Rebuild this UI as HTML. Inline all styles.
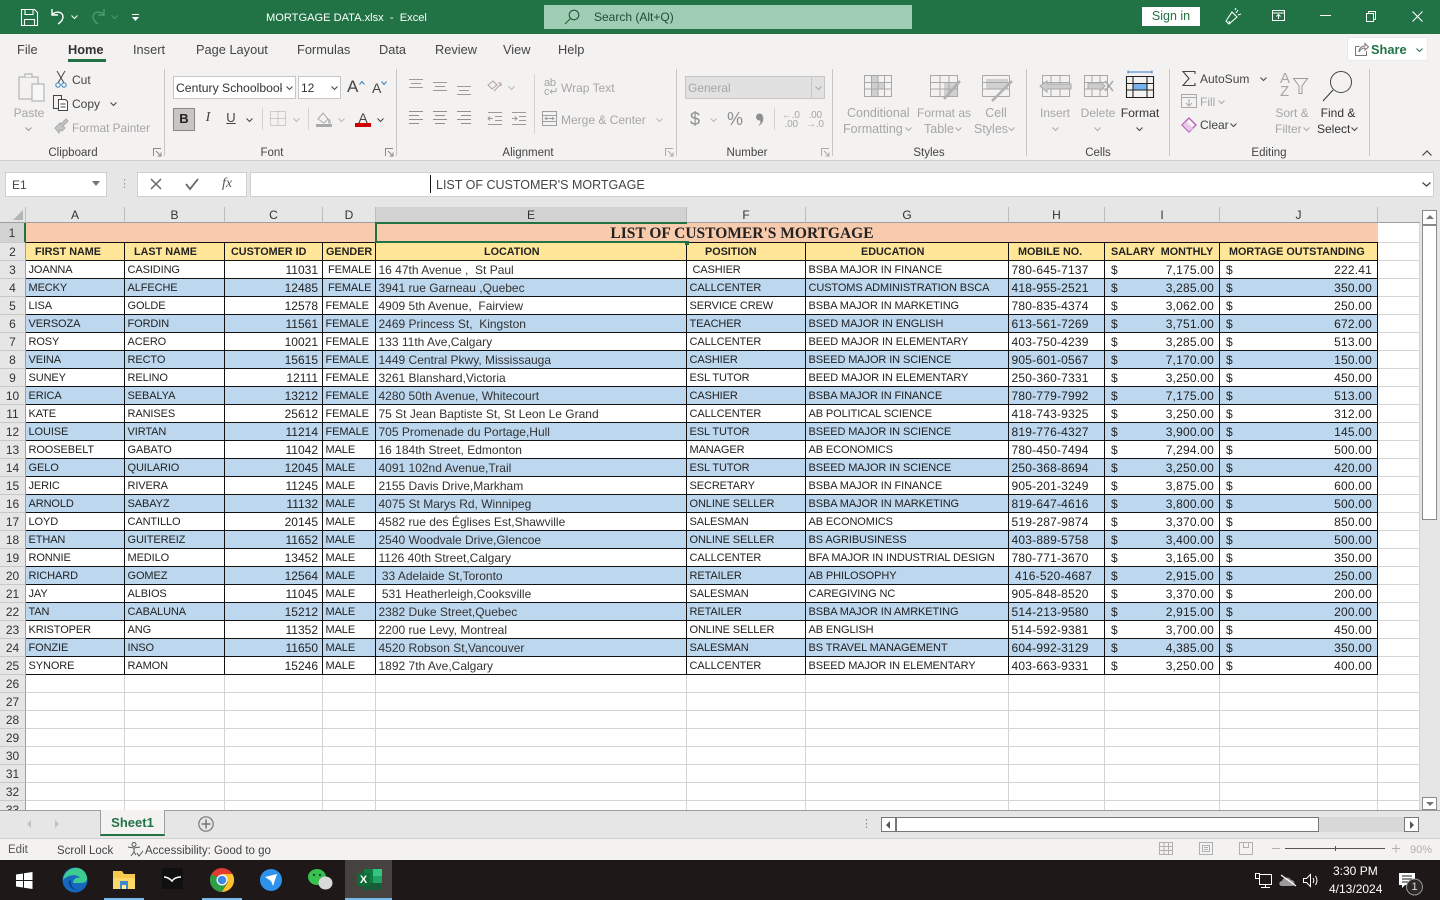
<!DOCTYPE html>
<html><head><meta charset="utf-8"><title>MORTGAGE DATA.xlsx - Excel</title>
<style>
*{box-sizing:border-box}
html,body{margin:0;padding:0;width:1440px;height:900px;overflow:hidden;background:#f3f2f1;font-family:"Liberation Sans",sans-serif;color:#333}
.a{position:absolute}
.t{position:absolute;white-space:nowrap;font-size:12.5px;line-height:16px;color:#444}
.g{color:#a6a6a6}
.c{text-align:center}
svg{position:absolute;overflow:visible}
.sep{position:absolute;width:1px;background:#c8c6c4;top:69px;height:87px}
table{position:absolute;left:0;top:207px;border-collapse:separate;border-spacing:0;table-layout:fixed;width:1420px;background:#fff}
td,th{padding:2px 2.5px 0;font-size:11px;font-weight:normal;white-space:nowrap;overflow:hidden;height:18px;line-height:15px;letter-spacing:-.1px;color:#222;border-right:1px solid #111;border-bottom:1px solid #111;text-align:left}
thead th{padding-top:0;font-size:12px;background:#e6e6e6;color:#333;text-align:center;height:16px;line-height:14px;border-right:1px solid #bdbdbd;border-bottom:1px solid #9e9e9e;letter-spacing:0}
thead th.s{background:#d2d2d2;border-bottom:1px solid #217346}
thead th.e{border-right:none}
td.r{font-size:12px;background:#e6e6e6;color:#333;text-align:center;border-right:1px solid #9e9e9e;border-bottom:1px solid #c8c8c8;padding:0;letter-spacing:0;line-height:16px}
td.rs{background:#d2d2d2;border-right:2px solid #217346}
td.x{border-right:1px solid #d4d4d4;border-bottom:1px solid #d4d4d4}
tr.b td:not(.r):not(.x){background:#bdd7ee}
tr.h td{background:#ffe699;font-weight:bold;font-size:10.8px;letter-spacing:0}
tr.h td.r{background:#e6e6e6;font-weight:normal;font-size:12px;padding:0}
tbody td:nth-child(9),td.n,td.m{font-size:12px;letter-spacing:.2px}
tr.h td:nth-child(9){font-size:10.8px;letter-spacing:0}
td.n{text-align:right;padding-right:4px;letter-spacing:0}
td.m{text-align:right;padding-right:5px;padding-left:6px}
td.m i{float:left;font-style:normal}
td.l{color:#333;font-size:12px;letter-spacing:0;padding-top:1px;line-height:16px}
td.ti{background:#f8cbad;font-family:"Liberation Serif",serif;font-weight:bold;font-size:15.5px;text-align:center;height:20px;line-height:16px;letter-spacing:0;border-right:none;overflow:visible;padding:3px 270px 0 0;border-bottom:1px solid #111}
</style></head><body>

<!-- title bar -->
<div class="a" style="left:0;top:0;width:1440px;height:34px;background:#217346"></div>
<svg style="left:21px;top:9px" width="17" height="17" fill="none" stroke="#fff" stroke-width="1.1"><path d="M.5.500h13l3 3v13H.5zM4 .5v5h8v-5M3.500 16.500v-6h10v6"/></svg>
<svg style="left:50px;top:8px" width="16" height="18" fill="none" stroke="#fff" stroke-width="1.4"><path d="M2 1v6h6M2 7c3-4 11-4 11 2 0 3-2 5-5 7"/></svg>
<svg style="left:71px;top:15px" width="7" height="4" fill="none" stroke="#fff"><path d="M.5.500l3 3 3-3"/></svg>
<svg style="left:90px;top:8px" width="16" height="18" fill="none" stroke="#4b9a70" stroke-width="1.4"><path d="M14 1v6H8M14 7c-3-4-11-4-11 2 0 3 2 5 5 7"/></svg>
<svg style="left:111px;top:15px" width="7" height="4" fill="none" stroke="#4b9a70"><path d="M.5.500l3 3 3-3"/></svg>
<svg style="left:131px;top:14px" width="9" height="8" fill="#fff"><path d="M1 0h7v1H1zM1 3h7L4.500 7z"/></svg>
<div class="t" style="left:266px;top:10px;color:#fff;font-size:11.1px">MORTGAGE DATA.xlsx &nbsp;- &nbsp;Excel</div>
<div class="a" style="left:544px;top:5px;width:368px;height:24px;background:#9fcdb3"></div>
<svg style="left:564px;top:9px" width="16" height="16" fill="none" stroke="#1f5a38" stroke-width="1.1"><circle cx="10" cy="6" r="4.800"/><path d="M6.500 9.500L1 15"/></svg>
<div class="t" style="left:594px;top:9px;color:#1d4d33;font-size:12px">Search (Alt+Q)</div>
<div class="a c" style="left:1142px;top:7px;width:58px;height:19px;background:#fff;color:#217346;font-size:12.5px;line-height:19px">Sign in</div>
<svg style="left:1225px;top:8px" width="17" height="17" fill="none" stroke="#fff" stroke-width="1.1"><path d="M1 13l6-9 5 5-8 7zM5 16l-1-3M11 5l2-3M13 7l3-1M10 2l1-2"/></svg>
<svg style="left:1272px;top:10px" width="13" height="12" fill="none" stroke="#fff"><path d="M.5.500h12v10H.5zM.5 3h12"/><path d="M6.500 9V4.500M4.500 6.500l2-2 2 2"/></svg>
<svg style="left:1320px;top:15px" width="11" height="2"><path d="M0 .5h11" stroke="#fff"/></svg>
<svg style="left:1366px;top:11px" width="10" height="11" fill="none" stroke="#fff"><path d="M.5 2.500h7v8h-7zM2.500 2.500V.5h7v8H7.500"/></svg>
<svg style="left:1412px;top:11px" width="11" height="11" stroke="#fff" stroke-width="1.100"><path d="M.5.500l10 10M10.500.5l-10 10"/></svg>

<!-- tabs -->
<div class="t" style="left:17px;top:42px;font-size:12.8px">File</div>
<div class="t" style="left:68px;top:42px;font-size:12.8px;font-weight:bold;color:#333">Home</div>
<div class="a" style="left:68px;top:59px;width:38px;height:3px;background:#217346"></div>
<div class="t" style="left:133px;top:42px;font-size:12.8px">Insert</div>
<div class="t" style="left:196px;top:42px;font-size:12.8px">Page Layout</div>
<div class="t" style="left:297px;top:42px;font-size:12.8px">Formulas</div>
<div class="t" style="left:379px;top:42px;font-size:12.8px">Data</div>
<div class="t" style="left:435px;top:42px;font-size:12.8px">Review</div>
<div class="t" style="left:503px;top:42px;font-size:12.8px">View</div>
<div class="t" style="left:558px;top:42px;font-size:12.8px">Help</div>
<div class="a" style="left:1348px;top:38px;width:79px;height:22px;background:#fff;border-radius:2px;box-shadow:0 0 1px #bbb"></div>
<svg style="left:1355px;top:43px" width="14" height="13" fill="none" stroke="#777"><path d="M.5 3.500h4M.5 3.500v9h11V8M4 9c0-4 3-6 6-6V.5L13.500 4 10 7V5C7 5 5 7 4 9z"/></svg>
<div class="t" style="left:1371px;top:42px;color:#217346;font-weight:bold;font-size:12.8px">Share</div>
<svg style="left:1416px;top:48px" width="7" height="4" fill="none" stroke="#217346"><path d="M.5.500l3 3 3-3"/></svg>

<!-- clipboard -->
<svg style="left:18px;top:72px" width="28" height="30" fill="#f3f2f1" stroke="#b5b5b5" stroke-width="1.200"><path d="M1 5h19v22H1z"/><path d="M7 5V2h7v3"/><path fill="#f7f7f7" d="M14 12h12v17H14z"/></svg>
<div class="t g c" style="left:13px;top:105px;width:32px;font-size:12px">Paste</div>
<svg style="left:25px;top:127px" width="7" height="4" fill="none" stroke="#999"><path d="M.5.500l3 3 3-3"/></svg>
<svg style="left:55px;top:71px" width="12" height="17" fill="none" stroke="#444"><path d="M2 0l7 12M10 0L3 12"/><circle cx="3" cy="14" r="2.200" stroke="#2f7ec2"/><circle cx="9" cy="14" r="2.200" stroke="#2f7ec2"/></svg>
<div class="t" style="left:72px;top:72px;font-size:12px">Cut</div>
<svg style="left:53px;top:95px" width="16" height="16" fill="#f3f2f1" stroke="#444"><path d="M.5.500h8v13h-8z"/><path fill="#fff" d="M5.500 4.500h7l2 2v9h-9z"/><path d="M7.500 9h5M7.500 12h5"/></svg>
<div class="t" style="left:72px;top:96px;font-size:12px">Copy</div>
<svg style="left:110px;top:102px" width="7" height="4" fill="none" stroke="#444"><path d="M.5.500l3 3 3-3"/></svg>
<svg style="left:54px;top:119px" width="15" height="15" fill="#c4c4c4" stroke="#aaa"><path d="M1 9l5-5 5 5-3 3-2-1-1 3z"/><path d="M7 5l5-5 2 2-5 5"/></svg>
<div class="t g" style="left:72px;top:120px;font-size:11.8px">Format Painter</div>
<div class="t c" style="left:40px;top:145px;width:66px;font-size:11.5px">Clipboard</div>
<svg style="left:153px;top:148px" width="9" height="9" fill="none" stroke="#888"><path d="M.5 8V.5H8M3 3l5 5M8 4.500V8H4.500"/></svg>
<div class="sep" style="left:164px"></div>

<!-- font -->
<div class="a" style="left:173px;top:76px;width:123px;height:23px;background:#fff;border:1px solid #c8c6c4"></div>
<div class="t" style="left:176px;top:80px;font-size:12.2px;width:106px;overflow:hidden;color:#333">Century Schoolbook</div>
<svg style="left:286px;top:86px" width="7" height="4" fill="none" stroke="#444"><path d="M.5.500l3 3 3-3"/></svg>
<div class="a" style="left:298px;top:76px;width:43px;height:23px;background:#fff;border:1px solid #c8c6c4"></div>
<div class="t" style="left:301px;top:80px;color:#333;font-size:12px">12</div>
<svg style="left:331px;top:86px" width="7" height="4" fill="none" stroke="#444"><path d="M.5.500l3 3 3-3"/></svg>
<div class="t" style="left:347px;top:77px;font-size:17px;line-height:20px;color:#444">A</div>
<svg style="left:359px;top:81px" width="6" height="4" fill="none" stroke="#2f7ec2"><path d="M.5 3.500l2.500-3 2.500 3"/></svg>
<div class="t" style="left:372px;top:79px;font-size:14px;line-height:18px;color:#444">A</div>
<svg style="left:381px;top:81px" width="6" height="4" fill="none" stroke="#2f7ec2"><path d="M.5.500l2.500 3 2.500-3"/></svg>
<div class="a" style="left:173px;top:108px;width:22px;height:23px;background:#c8c6c4;border:1px solid #8a8886"></div>
<div class="t c" style="left:173px;top:111px;width:22px;font-weight:bold;font-size:13px;color:#222">B</div>
<div class="t c" style="left:197px;top:110px;width:22px;font-family:'Liberation Serif',serif;font-style:italic;font-size:14px">I</div>
<div class="t c" style="left:220px;top:110px;width:22px;font-size:13px;text-decoration:underline">U</div>
<svg style="left:246px;top:118px" width="7" height="4" fill="none" stroke="#444"><path d="M.5.500l3 3 3-3"/></svg>
<div class="a" style="left:262px;top:108px;width:1px;height:22px;background:#d5d3d1"></div>
<svg style="left:270px;top:111px" width="16" height="15" fill="none" stroke="#a8a8a8" stroke-dasharray="1 1"><path d="M.5.500h15v14H.5zM8 .5v14M.5 7.500h15"/></svg>
<svg style="left:293px;top:118px" width="7" height="4" fill="none" stroke="#b8b8b8"><path d="M.5.500l3 3 3-3"/></svg>
<div class="a" style="left:308px;top:108px;width:1px;height:22px;background:#d5d3d1"></div>
<svg style="left:316px;top:111px" width="17" height="16" fill="none" stroke="#aaa"><path d="M2 8l5-6 5 6-4 4z"/><path d="M13 8c1 2 2 3 1 4s-2-1-1-4"/><path stroke="none" fill="#aaa" d="M0 13h16v3H0z"/></svg>
<svg style="left:338px;top:118px" width="7" height="4" fill="none" stroke="#b8b8b8"><path d="M.5.500l3 3 3-3"/></svg>
<div class="t c" style="left:355px;top:110px;width:16px;font-size:14px;color:#444">A</div>
<div class="a" style="left:355px;top:123px;width:16px;height:4px;background:#d00000"></div>
<svg style="left:377px;top:118px" width="7" height="4" fill="none" stroke="#444"><path d="M.5.500l3 3 3-3"/></svg>
<div class="t c" style="left:240px;top:145px;width:64px;font-size:11.5px">Font</div>
<svg style="left:385px;top:148px" width="9" height="9" fill="none" stroke="#888"><path d="M.5 8V.5H8M3 3l5 5M8 4.500V8H4.500"/></svg>
<div class="sep" style="left:396px"></div>

<!-- alignment -->
<svg style="left:408px;top:78px" width="70" height="18" fill="none" stroke="#9a9a9a"><path d="M1 1.500h14M3 5.500h10M1 9.500h14M25 4.500h14M27 8.500h10M25 12.500h14M49 8.500h14M51 12.500h10M49 16.500h14"/></svg>
<svg style="left:408px;top:111px" width="70" height="14" fill="none" stroke="#8f8f8f"><path d="M1 .5h14M1 4.500h10M1 8.500h14M1 12.500h10M25 .5h14M27 4.500h10M25 8.500h14M27 12.500h10M49 .5h14M53 4.500h10M49 8.500h14M53 12.500h10"/></svg>
<svg style="left:487px;top:80px" width="16" height="14" fill="none" stroke="#b0a0a0"><path d="M1 5l5-4 4 4-5 4zM7 11l7-7M11 3h3v3"/></svg>
<svg style="left:508px;top:86px" width="7" height="4" fill="none" stroke="#b8b8b8"><path d="M.5.500l3 3 3-3"/></svg>
<svg style="left:487px;top:112px" width="40" height="13" fill="none" stroke="#9a9a9a"><path d="M1 .5h14M8 4.500h7M8 8.500h7M1 12.500h14M1 6.500h5M3 4.500l-2 2 2 2M25 .5h14M32 4.500h7M32 8.500h7M25 12.500h14M25 6.500h5M28 4.500l2 2-2 2"/></svg>
<div class="a" style="left:534px;top:74px;width:1px;height:60px;background:#d5d3d1"></div>
<div class="t g" style="left:544px;top:79px;font-size:11px;line-height:9px;letter-spacing:-.3px">ab<br>c↵</div>
<div class="t g" style="left:561px;top:80px;font-size:12px">Wrap Text</div>
<svg style="left:542px;top:111px" width="15" height="15" fill="none" stroke="#a0a0a0"><path d="M.5.500h14v14H.5zM.5 4.500h14M.5 10.500h14M3 7.500h9M5 6l-2 1.500L5 9M10 6l2 1.500L10 9"/></svg>
<div class="t g" style="left:561px;top:112px;font-size:12px">Merge &amp; Center</div>
<svg style="left:656px;top:118px" width="7" height="4" fill="none" stroke="#b8b8b8"><path d="M.5.500l3 3 3-3"/></svg>
<div class="t c" style="left:490px;top:145px;width:76px;font-size:11.5px">Alignment</div>
<svg style="left:665px;top:148px" width="9" height="9" fill="none" stroke="#aaa"><path d="M.5 8V.5H8M3 3l5 5M8 4.500V8H4.500"/></svg>
<div class="sep" style="left:676px"></div>

<!-- number -->
<div class="a" style="left:685px;top:76px;width:140px;height:23px;background:#e1e1e1;border:1px solid #c8c6c4"></div>
<div class="a" style="left:811px;top:77px;width:1px;height:21px;background:#c8c6c4"></div>
<div class="t g" style="left:688px;top:80px;font-size:12px">General</div>
<svg style="left:815px;top:86px" width="7" height="4" fill="none" stroke="#aaa"><path d="M.5.500l3 3 3-3"/></svg>
<div class="t" style="left:690px;top:109px;font-size:18px;line-height:20px;color:#8f8f8f">$</div>
<svg style="left:710px;top:118px" width="7" height="4" fill="none" stroke="#b8b8b8"><path d="M.5.500l3 3 3-3"/></svg>
<div class="t" style="left:727px;top:109px;font-size:18px;line-height:20px;color:#8f8f8f">%</div>
<svg style="left:755px;top:113px" width="9" height="13" fill="#8f8f8f"><circle cx="4.500" cy="4" r="3.500"/><path d="M5 7c3-1 3-2 3-4 1 4 0 8-5 10 2-2 3-3 2-6z"/></svg>
<div class="a" style="left:774px;top:108px;width:1px;height:22px;background:#d5d3d1"></div>
<div class="t g" style="left:782px;top:111px;font-size:10px;line-height:9px;letter-spacing:-.2px">←.0<br>&nbsp;.00</div>
<div class="t g" style="left:806px;top:111px;font-size:10px;line-height:9px;letter-spacing:-.2px">&nbsp;.00<br>→.0</div>
<div class="t c" style="left:716px;top:145px;width:62px;font-size:11.5px">Number</div>
<svg style="left:821px;top:148px" width="9" height="9" fill="none" stroke="#aaa"><path d="M.5 8V.5H8M3 3l5 5M8 4.500V8H4.500"/></svg>
<div class="sep" style="left:832px"></div>

<!-- styles -->
<svg style="left:864px;top:75px" width="28" height="22" fill="none" stroke="#a8a8a8"><path fill="#d0d0d0" stroke="none" d="M7 1h7v6h6v7h-6v7H7z"/><path d="M.5.500h27v21H.5zM7.500.5v21M14 .5v21M20.500.5v21M.5 7.500h27M.5 14h27"/></svg>
<div class="t g" style="left:847px;top:105px">Conditional</div>
<div class="t g" style="left:843px;top:121px">Formatting</div>
<svg style="left:905px;top:127px" width="7" height="4" fill="none" stroke="#aaa"><path d="M.5.500l3 3 3-3"/></svg>
<svg style="left:930px;top:75px" width="32" height="28" fill="none" stroke="#a8a8a8"><path fill="#d0d0d0" stroke="none" d="M14 7h13v14H14z"/><path d="M.5.500h27v21H.5zM.5 7.500h27M.5 14h27M10 .5v21M19 .5v21"/><path stroke="#b0b0b0" stroke-width="2.500" d="M14 24L30 6"/></svg>
<div class="t g c" style="left:916px;top:105px;width:56px;font-size:12px">Format as</div>
<div class="t g" style="left:924px;top:121px;font-size:12.5px">Table</div>
<svg style="left:955px;top:127px" width="7" height="4" fill="none" stroke="#aaa"><path d="M.5.500l3 3 3-3"/></svg>
<svg style="left:982px;top:75px" width="32" height="28" fill="none" stroke="#a8a8a8"><path fill="#d0d0d0" stroke="none" d="M4 4h22v10H4z"/><path d="M.5.500h27v21H.5zM.5 7.500h27M.5 14h27"/><path stroke="#b0b0b0" stroke-width="2.500" d="M10 26L30 6"/></svg>
<div class="t g c" style="left:972px;top:105px;width:48px">Cell</div>
<div class="t g" style="left:974px;top:121px">Styles</div>
<svg style="left:1008px;top:127px" width="7" height="4" fill="none" stroke="#aaa"><path d="M.5.500l3 3 3-3"/></svg>
<div class="t c" style="left:905px;top:145px;width:48px;font-size:11.5px">Styles</div>
<div class="sep" style="left:1026px"></div>

<!-- cells -->
<svg style="left:1040px;top:75px" width="32" height="22" fill="none" stroke="#a8a8a8"><path d="M2.500.5h27v21h-27zM2.500 7.500h27M2.500 14h27M11 .5v21M20 .5v21"/><path fill="#ccc" d="M0 11l7-5v3h24v5H7v3z"/></svg>
<div class="t g c" style="left:1035px;top:105px;width:40px;font-size:12px">Insert</div>
<svg style="left:1052px;top:127px" width="7" height="4" fill="none" stroke="#aaa"><path d="M.5.500l3 3 3-3"/></svg>
<svg style="left:1084px;top:75px" width="30" height="22" fill="none" stroke="#a8a8a8"><path d="M.5.500h23v21H.5zM.5 7.500h23M.5 14h23M8 .5v21M16 .5v21"/><path fill="#ccc" d="M4 8h12V6l5 5-5 5v-2H4z"/><path stroke-width="1.500" d="M21 6l8 10M29 6l-8 10"/></svg>
<div class="t g c" style="left:1078px;top:105px;width:40px;font-size:12px">Delete</div>
<svg style="left:1094px;top:127px" width="7" height="4" fill="none" stroke="#aaa"><path d="M.5.500l3 3 3-3"/></svg>
<svg style="left:1125px;top:70px" width="30" height="28" fill="none" stroke="#222"><path stroke="#2f7ec2" d="M3 .5v3M27 .5v3M3 2h24"/><path fill="#74b5f0" stroke="none" d="M8 13h14v7H8z"/><path d="M1.500 6.500h27v21h-27zM1.500 13.500h27M1.500 20h27M8 6.500v21M22 6.500v21" stroke-width="1.100"/></svg>
<div class="t c" style="left:1118px;top:105px;width:44px;color:#333;font-size:12.2px">Format</div>
<svg style="left:1136px;top:127px" width="7" height="4" fill="none" stroke="#444"><path d="M.5.500l3 3 3-3"/></svg>
<div class="t c" style="left:1074px;top:145px;width:48px;font-size:11.5px">Cells</div>
<div class="sep" style="left:1169px"></div>

<!-- editing -->
<svg style="left:1182px;top:71px" width="14" height="15" fill="none" stroke="#444" stroke-width="1.100"><path d="M13 3V.5H1L7 7.500 1 14.500h12V12"/></svg>
<div class="t" style="left:1200px;top:71px;font-size:12px">AutoSum</div>
<svg style="left:1260px;top:77px" width="7" height="4" fill="none" stroke="#444"><path d="M.5.500l3 3 3-3"/></svg>
<svg style="left:1181px;top:94px" width="16" height="14" fill="none" stroke="#aaa"><path d="M.5.500h15v13H.5zM.5 3.500h15M8 5v7M5 9l3 3 3-3"/></svg>
<div class="t g" style="left:1200px;top:94px;font-size:12px">Fill</div>
<svg style="left:1218px;top:100px" width="7" height="4" fill="none" stroke="#aaa"><path d="M.5.500l3 3 3-3"/></svg>
<svg style="left:1181px;top:117px" width="16" height="16" fill="none" stroke="#b55ab8" stroke-width="1.300"><path d="M1 8l7-7 7 7-7 7z"/><path d="M4 5l7 7"/><path fill="#e8c8ea" stroke="none" d="M1.500 8L5 4.500l7 7L8 14.500z"/></svg>
<div class="t" style="left:1200px;top:117px;font-size:12px">Clear</div>
<svg style="left:1230px;top:123px" width="7" height="4" fill="none" stroke="#444"><path d="M.5.500l3 3 3-3"/></svg>
<div class="t g" style="left:1280px;top:72px;font-size:15px;line-height:13px">A<br>Z</div>
<svg style="left:1293px;top:78px" width="15" height="16" fill="none" stroke="#999"><path d="M.5.500h14L9 8v7.500H6V8z"/></svg>
<div class="t g c" style="left:1270px;top:105px;width:44px;font-size:12px">Sort &amp;</div>
<div class="t g" style="left:1275px;top:121px;font-size:12px">Filter</div>
<svg style="left:1303px;top:127px" width="7" height="4" fill="none" stroke="#aaa"><path d="M.5.500l3 3 3-3"/></svg>
<svg style="left:1322px;top:71px" width="32" height="30" fill="none" stroke="#444"><circle cx="19" cy="11" r="10.500"/><path d="M11 19L1 30" stroke-width="1.200"/></svg>
<div class="t c" style="left:1314px;top:105px;width:48px;color:#333;font-size:12px">Find &amp;</div>
<div class="t" style="left:1317px;top:121px;color:#333;font-size:12px">Select</div>
<svg style="left:1351px;top:127px" width="7" height="4" fill="none" stroke="#444"><path d="M.5.500l3 3 3-3"/></svg>
<div class="t c" style="left:1245px;top:145px;width:48px;font-size:11.5px">Editing</div>
<div class="sep" style="left:1369px"></div>
<svg style="left:1422px;top:150px" width="10" height="6" fill="none" stroke="#444" stroke-width="1.200"><path d="M.5 5.500L5 1l4.500 4.500"/></svg>

<!-- formula bar -->
<div class="a" style="left:0;top:160px;width:1440px;height:47px;background:#e6e6e6;border-top:1px solid #d0cfcd"></div>
<div class="a" style="left:5px;top:172px;width:102px;height:25px;background:#fff;border:1px solid #cfcfcf"></div>
<div class="t" style="left:12px;top:177px;font-size:12px">E1</div>
<svg style="left:92px;top:181px" width="8" height="5" fill="#777"><path d="M0 0h8L4 5z"/></svg>
<div class="t" style="left:119px;top:176px;color:#999;font-size:11px">⋮</div>
<div class="a" style="left:137px;top:172px;width:110px;height:25px;background:#fff;border:1px solid #cfcfcf"></div>
<svg style="left:150px;top:178px" width="12" height="12" stroke="#666" stroke-width="1.500"><path d="M1 1l10 10M11 1L1 11"/></svg>
<svg style="left:185px;top:178px" width="14" height="12" fill="none" stroke="#666" stroke-width="1.800"><path d="M1 6l4 5 8-10"/></svg>
<div class="t" style="left:222px;top:176px;font-family:'Liberation Serif',serif;font-style:italic;font-size:14px;color:#555">fx</div>
<div class="a" style="left:250px;top:172px;width:1184px;height:25px;background:#fff;border:1px solid #cfcfcf"></div>
<div class="a" style="left:430px;top:175px;width:1px;height:18px;background:#111"></div>
<div class="t" style="left:436px;top:177px;color:#444;font-size:12.5px">LIST OF CUSTOMER'S MORTGAGE</div>
<svg style="left:1422px;top:182px" width="9" height="5" fill="none" stroke="#444" stroke-width="1.300"><path d="M.5.500l4 3.500 4-3.500"/></svg>

<!-- grid -->
<table>
<colgroup><col style="width:26px"><col style="width:99px"><col style="width:100px"><col style="width:98px"><col style="width:53px"><col style="width:311px"><col style="width:119px"><col style="width:203px"><col style="width:96px"><col style="width:115px"><col style="width:158px"><col style="width:42px"></colgroup>
<thead><tr style="height:16px"><th></th><th>A</th><th>B</th><th>C</th><th>D</th><th class="s">E</th><th>F</th><th>G</th><th>H</th><th>I</th><th>J</th><th class="e"></th></tr></thead>
<tbody>
<tr style="height:20px"><td class="r rs" style="height:20px">1</td><td colspan="4" style="background:#f8cbad;height:20px;border-right:none"></td><td colspan="6" class="ti">LIST OF CUSTOMER'S MORTGAGE</td><td class="x"></td></tr>
<tr class="h"><td class="r">2</td><td style="padding-left:9px">FIRST NAME</td><td style="padding-left:9px">LAST NAME</td><td style="padding-left:6px">CUSTOMER ID</td><td style="padding-left:3px">GENDER</td><td style="padding-left:108px">LOCATION</td><td style="padding-left:18px">POSITION</td><td style="padding-left:55px">EDUCATION</td><td style="padding-left:9px">MOBILE NO.</td><td style="padding-left:6px">SALARY &nbsp;MONTHLY</td><td style="padding-left:9px">MORTAGE OUTSTANDING</td><td class="x" style="background:#fff"></td></tr>
<tr><td class="r">3</td><td>JOANNA</td><td>CASIDING</td><td class="n">11031</td><td style="padding-left:5px">FEMALE</td><td class="l">16 47th Avenue , &nbsp;St Paul</td><td>&nbsp;CASHIER</td><td>BSBA MAJOR IN FINANCE</td><td>780-645-7137</td><td class="m"><i>$</i>7,175.00</td><td class="m"><i>$</i>222.41</td><td class="x"></td></tr>
<tr class="b"><td class="r">4</td><td>MECKY</td><td>ALFECHE</td><td class="n">12485</td><td style="padding-left:5px">FEMALE</td><td class="l">3941 rue Garneau ,Quebec</td><td>CALLCENTER</td><td>CUSTOMS ADMINISTRATION BSCA</td><td>418-955-2521</td><td class="m"><i>$</i>3,285.00</td><td class="m"><i>$</i>350.00</td><td class="x"></td></tr>
<tr><td class="r">5</td><td>LISA</td><td>GOLDE</td><td class="n">12578</td><td>FEMALE</td><td class="l">4909 5th Avenue, &nbsp;Fairview</td><td>SERVICE CREW</td><td>BSBA MAJOR IN MARKETING</td><td>780-835-4374</td><td class="m"><i>$</i>3,062.00</td><td class="m"><i>$</i>250.00</td><td class="x"></td></tr>
<tr class="b"><td class="r">6</td><td>VERSOZA</td><td>FORDIN</td><td class="n">11561</td><td>FEMALE</td><td class="l">2469 Princess St, &nbsp;Kingston</td><td>TEACHER</td><td>BSED MAJOR IN ENGLISH</td><td>613-561-7269</td><td class="m"><i>$</i>3,751.00</td><td class="m"><i>$</i>672.00</td><td class="x"></td></tr>
<tr><td class="r">7</td><td>ROSY</td><td>ACERO</td><td class="n">10021</td><td>FEMALE</td><td class="l">133 11th Ave,Calgary</td><td>CALLCENTER</td><td>BEED MAJOR IN ELEMENTARY</td><td>403-750-4239</td><td class="m"><i>$</i>3,285.00</td><td class="m"><i>$</i>513.00</td><td class="x"></td></tr>
<tr class="b"><td class="r">8</td><td>VEINA</td><td>RECTO</td><td class="n">15615</td><td>FEMALE</td><td class="l">1449 Central Pkwy, Mississauga</td><td>CASHIER</td><td>BSEED MAJOR IN SCIENCE</td><td>905-601-0567</td><td class="m"><i>$</i>7,170.00</td><td class="m"><i>$</i>150.00</td><td class="x"></td></tr>
<tr><td class="r">9</td><td>SUNEY</td><td>RELINO</td><td class="n">12111</td><td>FEMALE</td><td class="l">3261 Blanshard,Victoria</td><td>ESL TUTOR</td><td>BEED MAJOR IN ELEMENTARY</td><td>250-360-7331</td><td class="m"><i>$</i>3,250.00</td><td class="m"><i>$</i>450.00</td><td class="x"></td></tr>
<tr class="b"><td class="r">10</td><td>ERICA</td><td>SEBALYA</td><td class="n">13212</td><td>FEMALE</td><td class="l">4280 50th Avenue, Whitecourt</td><td>CASHIER</td><td>BSBA MAJOR IN FINANCE</td><td>780-779-7992</td><td class="m"><i>$</i>7,175.00</td><td class="m"><i>$</i>513.00</td><td class="x"></td></tr>
<tr><td class="r">11</td><td>KATE</td><td>RANISES</td><td class="n">25612</td><td>FEMALE</td><td class="l">75 St Jean Baptiste St, St Leon Le Grand</td><td>CALLCENTER</td><td>AB POLITICAL SCIENCE</td><td>418-743-9325</td><td class="m"><i>$</i>3,250.00</td><td class="m"><i>$</i>312.00</td><td class="x"></td></tr>
<tr class="b"><td class="r">12</td><td>LOUISE</td><td>VIRTAN</td><td class="n">11214</td><td>FEMALE</td><td class="l">705 Promenade du Portage,Hull</td><td>ESL TUTOR</td><td>BSEED MAJOR IN SCIENCE</td><td>819-776-4327</td><td class="m"><i>$</i>3,900.00</td><td class="m"><i>$</i>145.00</td><td class="x"></td></tr>
<tr><td class="r">13</td><td>ROOSEBELT</td><td>GABATO</td><td class="n">11042</td><td>MALE</td><td class="l">16 184th Street, Edmonton</td><td>MANAGER</td><td>AB ECONOMICS</td><td>780-450-7494</td><td class="m"><i>$</i>7,294.00</td><td class="m"><i>$</i>500.00</td><td class="x"></td></tr>
<tr class="b"><td class="r">14</td><td>GELO</td><td>QUILARIO</td><td class="n">12045</td><td>MALE</td><td class="l">4091 102nd Avenue,Trail</td><td>ESL TUTOR</td><td>BSEED MAJOR IN SCIENCE</td><td>250-368-8694</td><td class="m"><i>$</i>3,250.00</td><td class="m"><i>$</i>420.00</td><td class="x"></td></tr>
<tr><td class="r">15</td><td>JERIC</td><td>RIVERA</td><td class="n">11245</td><td>MALE</td><td class="l">2155 Davis Drive,Markham</td><td>SECRETARY</td><td>BSBA MAJOR IN FINANCE</td><td>905-201-3249</td><td class="m"><i>$</i>3,875.00</td><td class="m"><i>$</i>600.00</td><td class="x"></td></tr>
<tr class="b"><td class="r">16</td><td>ARNOLD</td><td>SABAYZ</td><td class="n">11132</td><td>MALE</td><td class="l">4075 St Marys Rd, Winnipeg</td><td>ONLINE SELLER</td><td>BSBA MAJOR IN MARKETING</td><td>819-647-4616</td><td class="m"><i>$</i>3,800.00</td><td class="m"><i>$</i>500.00</td><td class="x"></td></tr>
<tr><td class="r">17</td><td>LOYD</td><td>CANTILLO</td><td class="n">20145</td><td>MALE</td><td class="l">4582 rue des Églises Est,Shawville</td><td>SALESMAN</td><td>AB ECONOMICS</td><td>519-287-9874</td><td class="m"><i>$</i>3,370.00</td><td class="m"><i>$</i>850.00</td><td class="x"></td></tr>
<tr class="b"><td class="r">18</td><td>ETHAN</td><td>GUITEREIZ</td><td class="n">11652</td><td>MALE</td><td class="l">2540 Woodvale Drive,Glencoe</td><td>ONLINE SELLER</td><td>BS AGRIBUSINESS</td><td>403-889-5758</td><td class="m"><i>$</i>3,400.00</td><td class="m"><i>$</i>500.00</td><td class="x"></td></tr>
<tr><td class="r">19</td><td>RONNIE</td><td>MEDILO</td><td class="n">13452</td><td>MALE</td><td class="l">1126 40th Street,Calgary</td><td>CALLCENTER</td><td>BFA MAJOR IN INDUSTRIAL DESIGN</td><td>780-771-3670</td><td class="m"><i>$</i>3,165.00</td><td class="m"><i>$</i>350.00</td><td class="x"></td></tr>
<tr class="b"><td class="r">20</td><td>RICHARD</td><td>GOMEZ</td><td class="n">12564</td><td>MALE</td><td class="l">&nbsp;33 Adelaide St,Toronto</td><td>RETAILER</td><td>AB PHILOSOPHY</td><td>&nbsp;416-520-4687</td><td class="m"><i>$</i>2,915.00</td><td class="m"><i>$</i>250.00</td><td class="x"></td></tr>
<tr><td class="r">21</td><td>JAY</td><td>ALBIOS</td><td class="n">11045</td><td>MALE</td><td class="l">&nbsp;531 Heatherleigh,Cooksville</td><td>SALESMAN</td><td>CAREGIVING NC</td><td>905-848-8520</td><td class="m"><i>$</i>3,370.00</td><td class="m"><i>$</i>200.00</td><td class="x"></td></tr>
<tr class="b"><td class="r">22</td><td>TAN</td><td>CABALUNA</td><td class="n">15212</td><td>MALE</td><td class="l">2382 Duke Street,Quebec</td><td>RETAILER</td><td>BSBA MAJOR IN AMRKETING</td><td>514-213-9580</td><td class="m"><i>$</i>2,915.00</td><td class="m"><i>$</i>200.00</td><td class="x"></td></tr>
<tr><td class="r">23</td><td>KRISTOPER</td><td>ANG</td><td class="n">11352</td><td>MALE</td><td class="l">2200 rue Levy, Montreal</td><td>ONLINE SELLER</td><td>AB ENGLISH</td><td>514-592-9381</td><td class="m"><i>$</i>3,700.00</td><td class="m"><i>$</i>450.00</td><td class="x"></td></tr>
<tr class="b"><td class="r">24</td><td>FONZIE</td><td>INSO</td><td class="n">11650</td><td>MALE</td><td class="l">4520 Robson St,Vancouver</td><td>SALESMAN</td><td>BS TRAVEL MANAGEMENT</td><td>604-992-3129</td><td class="m"><i>$</i>4,385.00</td><td class="m"><i>$</i>350.00</td><td class="x"></td></tr>
<tr><td class="r">25</td><td>SYNORE</td><td>RAMON</td><td class="n">15246</td><td>MALE</td><td class="l">1892 7th Ave,Calgary</td><td>CALLCENTER</td><td>BSEED MAJOR IN ELEMENTARY</td><td>403-663-9331</td><td class="m"><i>$</i>3,250.00</td><td class="m"><i>$</i>400.00</td><td class="x"></td></tr>
<tr><td class="r">26</td><td class="x"></td><td class="x"></td><td class="x"></td><td class="x"></td><td class="x"></td><td class="x"></td><td class="x"></td><td class="x"></td><td class="x"></td><td class="x"></td><td class="x"></td></tr>
<tr><td class="r">27</td><td class="x"></td><td class="x"></td><td class="x"></td><td class="x"></td><td class="x"></td><td class="x"></td><td class="x"></td><td class="x"></td><td class="x"></td><td class="x"></td><td class="x"></td></tr>
<tr><td class="r">28</td><td class="x"></td><td class="x"></td><td class="x"></td><td class="x"></td><td class="x"></td><td class="x"></td><td class="x"></td><td class="x"></td><td class="x"></td><td class="x"></td><td class="x"></td></tr>
<tr><td class="r">29</td><td class="x"></td><td class="x"></td><td class="x"></td><td class="x"></td><td class="x"></td><td class="x"></td><td class="x"></td><td class="x"></td><td class="x"></td><td class="x"></td><td class="x"></td></tr>
<tr><td class="r">30</td><td class="x"></td><td class="x"></td><td class="x"></td><td class="x"></td><td class="x"></td><td class="x"></td><td class="x"></td><td class="x"></td><td class="x"></td><td class="x"></td><td class="x"></td></tr>
<tr><td class="r">31</td><td class="x"></td><td class="x"></td><td class="x"></td><td class="x"></td><td class="x"></td><td class="x"></td><td class="x"></td><td class="x"></td><td class="x"></td><td class="x"></td><td class="x"></td></tr>
<tr><td class="r">32</td><td class="x"></td><td class="x"></td><td class="x"></td><td class="x"></td><td class="x"></td><td class="x"></td><td class="x"></td><td class="x"></td><td class="x"></td><td class="x"></td><td class="x"></td></tr>
<tr><td class="r">33</td><td class="x"></td><td class="x"></td><td class="x"></td><td class="x"></td><td class="x"></td><td class="x"></td><td class="x"></td><td class="x"></td><td class="x"></td><td class="x"></td><td class="x"></td></tr>
</tbody></table>
<svg style="left:13px;top:210px" width="10" height="10"><path d="M10 0v10H0z" fill="#b5b5b5"/></svg>
<!-- selection box: open on the right, the title overflows across it -->
<div class="a" style="left:375px;top:222px;width:312px;height:21px;border:2px solid #217346;border-right:none;pointer-events:none"></div>
<div class="a" style="left:685px;top:241px;width:4px;height:4px;background:#217346"></div>

<!-- vertical scrollbar -->
<div class="a" style="left:1420px;top:207px;width:20px;height:603px;background:#e6e6e6"></div>
<div class="a" style="left:1422px;top:210px;width:15px;height:15px;background:#fff;border:1px solid #8a8a8a"></div>
<svg style="left:1426px;top:215px" width="8" height="4" fill="#777"><path d="M4 0l4 4H0z"/></svg>
<div class="a" style="left:1422px;top:225px;width:15px;height:295px;background:#fff;border:1px solid #8a8a8a"></div>
<div class="a" style="left:1422px;top:797px;width:15px;height:13px;background:#fff;border:1px solid #8a8a8a"></div>
<svg style="left:1426px;top:802px" width="8" height="4" fill="#777"><path d="M0 0h8L4 4z"/></svg>

<!-- sheet tabs -->
<div class="a" style="left:0;top:810px;width:1440px;height:28px;background:#e6e6e6;border-top:1px solid #9e9e9e"></div>
<div class="a" style="left:0;top:838px;width:1440px;height:1px;background:#cfcfcf"></div>
<svg style="left:26px;top:820px" width="36" height="8" fill="#c0c0c0"><path d="M5 0v8L1 4zM29 0v8l4-4z"/></svg>
<div class="a" style="left:100px;top:810px;width:65px;height:26px;background:#f3f2f1;border:1px solid #9e9e9e;border-top:none;border-bottom:2.500px solid #217346"></div>
<div class="t c" style="left:100px;top:815px;width:65px;font-weight:bold;font-size:13px;color:#217346">Sheet1</div>
<svg style="left:198px;top:816px" width="16" height="16" fill="none" stroke="#777" stroke-width="1.200"><circle cx="8" cy="8" r="7.200"/><path d="M8 3.500v9M3.500 8h9" stroke-width="1.500"/></svg>
<div class="t" style="left:861px;top:816px;color:#888;font-size:11px">⋮</div>
<div class="a" style="left:881px;top:817px;width:15px;height:15px;background:#fff;border:1px solid #777"></div>
<svg style="left:886px;top:821px" width="4" height="8" fill="#555"><path d="M4 0v8L0 4z"/></svg>
<div class="a" style="left:896px;top:817px;width:423px;height:15px;background:#fff;border:1px solid #777"></div>
<div class="a" style="left:1319px;top:817px;width:85px;height:15px;background:#d8d8d8"></div>
<div class="a" style="left:1404px;top:817px;width:15px;height:15px;background:#fff;border:1px solid #777"></div>
<svg style="left:1410px;top:821px" width="4" height="8" fill="#555"><path d="M0 0v8l4-4z"/></svg>

<!-- status -->
<div class="t" style="left:8px;top:842px;font-size:11.5px;color:#555">Edit</div>
<div class="t" style="left:57px;top:843px;font-size:11.5px;color:#444">Scroll Lock</div>
<svg style="left:128px;top:842px" width="16" height="15" fill="none" stroke="#555"><circle cx="6" cy="2.500" r="2"/><path d="M0 5l6 1 6-1M6 6v4l-3 4M6 10l2 3M9 11l2 3 4-5"/></svg>
<div class="t" style="left:145px;top:843px;font-size:11.5px;color:#444">Accessibility: Good to go</div>
<svg style="left:1159px;top:842px" width="14" height="13" fill="none" stroke="#b0b0b0"><path d="M.5.500h13v12H.5zM.5 4.500h13M.5 8.500h13M5 .5v12M9.500.5v12"/></svg>
<svg style="left:1199px;top:842px" width="14" height="13" fill="none" stroke="#b0b0b0"><path d="M.5.500h13v12H.5zM3.500 3.500h7v6h-7zM5 5.500h4M5 7.500h4"/></svg>
<svg style="left:1239px;top:842px" width="14" height="13" fill="none" stroke="#b0b0b0"><path d="M.5.500h13v12H.5zM4.500.5v5h5v-5"/></svg>
<svg style="left:1272px;top:844px" width="128" height="9" fill="none" stroke="#b0b0b0"><path d="M0 4.500h8M120 4.500h8M124 .5v8"/><path d="M13 4.500h100M63.500 2v5" stroke="#555"/></svg>
<div class="t" style="left:1410px;top:842px;font-size:11px;color:#b0b0b0">90%</div>

<!-- taskbar -->
<div class="a" style="left:0;top:860px;width:1440px;height:40px;background:#1e1918"></div>
<svg style="left:16px;top:872px" width="17" height="17" fill="#fff"><path d="M0 2.500l7-1v6.500H0zM8 1.300L16.500 0v8H8zM0 9h7v6.500l-7-1zM8 9h8.500v8L8 15.700z"/></svg>
<svg style="left:62px;top:867px" width="26" height="26"><circle cx="13" cy="13" r="12.500" fill="#1567c0"/><path d="M1 13C2 4 10 0 16 1c6 1 9 6 9 11 0 3-3 4-6 4H11c0-5 5-6 7-5-2-4-12-4-17 2z" fill="#3ecb8f"/><path d="M9 14c-1 6 5 11 12 8-7 3-16-1-14-9z" fill="#0a3f8a"/></svg>
<svg style="left:113px;top:871px" width="22" height="18"><path d="M0 0h9l2 3h11v15H0z" fill="#f6c94c"/><path d="M0 7h22v11H0z" fill="#ffd966"/><path d="M7 10h8v8H7z" fill="#3e8ad0"/><path d="M9 14h4v4H9z" fill="#ffe99a"/></svg>
<div class="a" style="left:104px;top:898px;width:40px;height:2px;background:#76b9ed"></div>
<div class="a" style="left:162px;top:868px;width:21px;height:21px;background:#101010"></div>
<svg style="left:164px;top:876px" width="17" height="7" fill="none" stroke="#fff" stroke-width="1.600"><path d="M0 1c3 0 5 1 8 4 2-3 5-4 9-4"/></svg>
<svg style="left:210px;top:868px" width="24" height="24"><circle cx="12" cy="12" r="12" fill="#e33b2e"/><path d="M12 12L1.500 6A12 12 0 0 0 12 24l6-11z" fill="#2f9e44"/><path d="M12 6h10.500A12 12 0 0 1 12 24l6-10z" fill="#fbc02d"/><circle cx="12" cy="12" r="5.500" fill="#fff"/><circle cx="12" cy="12" r="4.300" fill="#3f88e6"/></svg>
<div class="a" style="left:202px;top:898px;width:40px;height:2px;background:#76b9ed"></div>
<svg style="left:260px;top:869px" width="22" height="22"><circle cx="11" cy="11" r="11" fill="#2d92ec"/><path d="M5 8l12-3-4 12-2-5z" fill="#fff"/></svg>
<svg style="left:308px;top:868px" width="25" height="23"><ellipse cx="9" cy="9" rx="9" ry="8" fill="#36c24c"/><ellipse cx="17.500" cy="15" rx="7" ry="6.500" fill="#d9d9d9"/><circle cx="6" cy="7" r="1.200" fill="#145"/><circle cx="12" cy="7" r="1.200" fill="#145"/></svg>
<div class="a" style="left:345px;top:860px;width:47px;height:40px;background:#45423f"></div>
<div class="a" style="left:345px;top:898px;width:47px;height:2px;background:#76b9ed"></div>
<svg style="left:357px;top:869px" width="25" height="21"><path d="M7 0h18v21H7z" fill="#107c41"/><path d="M16 0h9v7h-9z" fill="#33c481"/><path d="M16 7h9v7h-9z" fill="#21a366"/><path d="M7 14h18v7H7z" fill="#185c37"/><path d="M0 4h13v13H0z" fill="#0f6b38"/></svg>
<div class="t c" style="left:357px;top:872px;width:13px;color:#fff;font-weight:bold;font-size:11px">X</div>
<svg style="left:1255px;top:873px" width="17" height="15" fill="none" stroke="#fff"><path d="M4.500 1.500h12v10h-12zM10.500 11.500v3M6 14.500h9"/><path d="M.5.500h4v5h-4z" fill="#1e1918"/></svg>
<svg style="left:1279px;top:874px" width="19" height="13"><path d="M3 12c-4 0-3-5 0-5 1-4 7-5 9-1 4 0 5 6 1 6z" fill="#9a9a9a"/><path d="M2 1l15 11" stroke="#fff" stroke-width="1.200"/></svg>
<svg style="left:1303px;top:874px" width="16" height="13" fill="none" stroke="#fff"><path d="M.5 4.500h3l4-4v12l-4-4h-3z"/><path d="M10 4c1 1.500 1 3.500 0 5M12.500 2c2 3 2 6 0 9"/></svg>
<div class="t" style="left:1333px;top:863px;color:#fff;font-size:12px">3:30 PM</div>
<div class="t" style="left:1329px;top:881px;color:#fff;font-size:12px">4/13/2024</div>
<svg style="left:1399px;top:873px" width="25" height="24"><path d="M0 0h16v12H6l-3 3v-3H0z" fill="#fff"/><path d="M3 3h10M3 6h10M3 9h7" stroke="#1e1918"/><circle cx="15.500" cy="14" r="8" fill="#2b2827" stroke="#999"/></svg>
<div class="t c" style="left:1406px;top:879px;width:17px;color:#ddd;font-size:11px">1</div>
</body></html>
